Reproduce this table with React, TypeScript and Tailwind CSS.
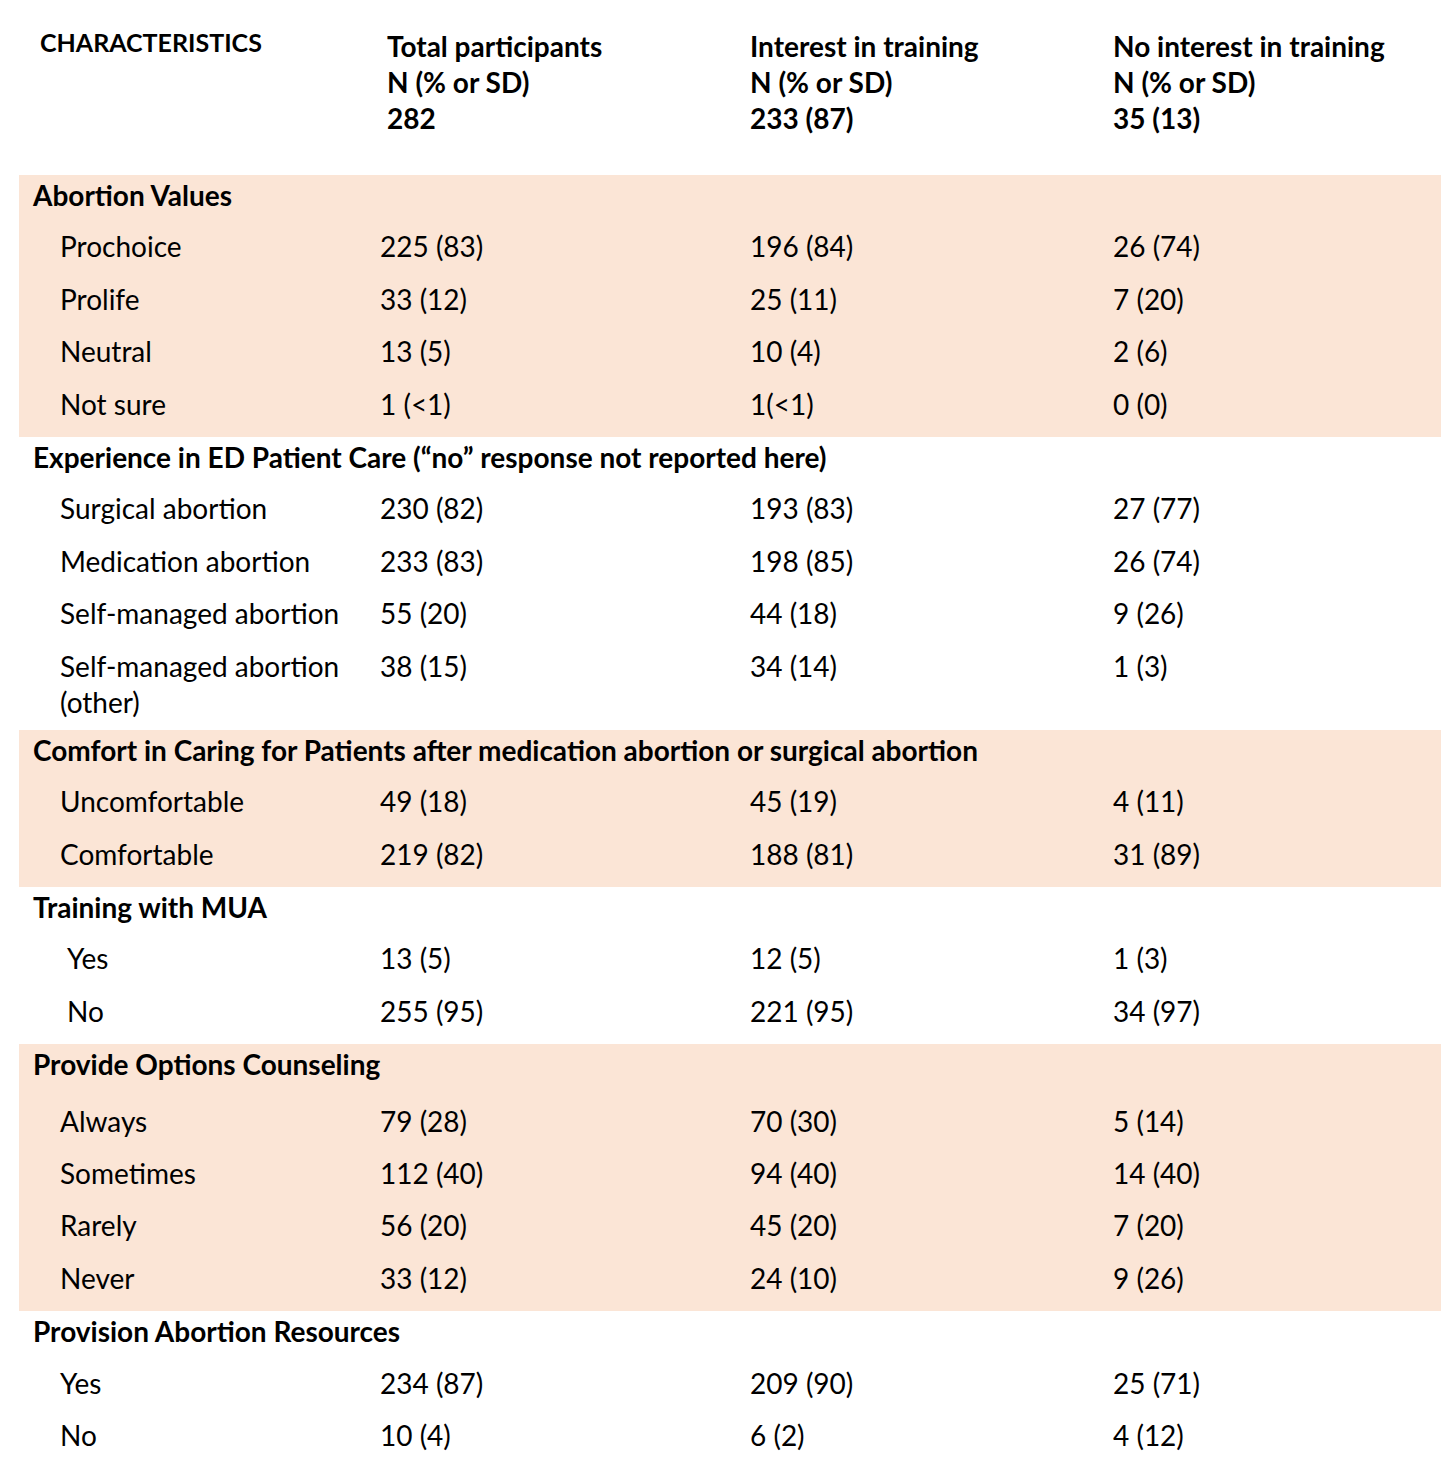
import React from "react";

type Row = { label: string; v: [string, string, string]; h?: string; pl?: string };
type Section = { title: string; shaded: boolean; headH?: string; rows: Row[] };

const sections: Section[] = [
  {
    title: "Abortion Values",
    shaded: true,
    rows: [
      { label: "Prochoice", v: ["225 (83)", "196 (84)", "26 (74)"] },
      { label: "Prolife", v: ["33 (12)", "25 (11)", "7 (20)"] },
      { label: "Neutral", v: ["13 (5)", "10 (4)", "2 (6)"] },
      { label: "Not sure", v: ["1 (<1)", "1(<1)", "0 (0)"] },
    ],
  },
  {
    title: "Experience in ED Patient Care (\u201cno\u201d response not reported here)",
    shaded: false,
    rows: [
      { label: "Surgical abortion", v: ["230 (82)", "193 (83)", "27 (77)"] },
      { label: "Medication abortion", v: ["233 (83)", "198 (85)", "26 (74)"] },
      { label: "Self-managed abortion", v: ["55 (20)", "44 (18)", "9 (26)"] },
      { label: "Self-managed abortion (other)", v: ["38 (15)", "34 (14)", "1 (3)"], h: "h-[83.4px]" },
    ],
  },
  {
    title: "Comfort in Caring for Patients after medication abortion or surgical abortion",
    shaded: true,
    rows: [
      { label: "Uncomfortable", v: ["49 (18)", "45 (19)", "4 (11)"] },
      { label: "Comfortable", v: ["219 (82)", "188 (81)", "31 (89)"] },
    ],
  },
  {
    title: "Training with MUA",
    shaded: false,
    rows: [
      { label: "Yes", v: ["13 (5)", "12 (5)", "1 (3)"], pl: "pl-[48px]" },
      { label: "No", v: ["255 (95)", "221 (95)", "34 (97)"], pl: "pl-[48px]" },
    ],
  },
  {
    title: "Provide Options Counseling",
    shaded: true,
    headH: "h-[57.4px]",
    rows: [
      { label: "Always", v: ["79 (28)", "70 (30)", "5 (14)"] },
      { label: "Sometimes", v: ["112 (40)", "94 (40)", "14 (40)"] },
      { label: "Rarely", v: ["56 (20)", "45 (20)", "7 (20)"] },
      { label: "Never", v: ["33 (12)", "24 (10)", "9 (26)"] },
    ],
  },
  {
    title: "Provision Abortion Resources",
    shaded: false,
    rows: [
      { label: "Yes", v: ["234 (87)", "209 (90)", "25 (71)"] },
      { label: "No", v: ["10 (4)", "6 (2)", "4 (12)"] },
    ],
  },
];

export default function App() {
  return (
    <div className="w-[1441px] min-h-[1473px] bg-white text-black font-['Lato',sans-serif] text-[28px] leading-[36px]">
      {/* Header */}
      <div className="h-[175px] pt-[28px] grid grid-cols-[387px_363px_363px_1fr]">
        <div className="pl-[40px] -mt-[4px] font-bold text-[25px]">CHARACTERISTICS</div>
        <div className="font-bold">
          <div>Total participants</div>
          <div>N (% or SD)</div>
          <div>282</div>
        </div>
        <div className="font-bold">
          <div>Interest in training</div>
          <div>N (% or SD)</div>
          <div>233 (87)</div>
        </div>
        <div className="font-bold">
          <div>No interest in training</div>
          <div>N (% or SD)</div>
          <div>35 (13)</div>
        </div>
      </div>

      <div className="ml-[19px]">
        {sections.map((s) => (
          <div key={s.title} className={s.shaded ? "bg-[#fbe5d6]" : "bg-white"}>
            <div className={`${s.headH ?? "h-[52.4px]"} pl-[14px] pt-[2px] font-bold whitespace-nowrap`}>
              {s.title}
            </div>
            {s.rows.map((r) => (
              <div
                key={s.title + r.label}
                className={`${r.h ?? "h-[52.4px]"} pt-[1px] grid grid-cols-[361px_370px_363px_1fr]`}
              >
                <div className={`${r.pl ?? "pl-[41px]"} pr-[20px]`}>{r.label}</div>
                <div>{r.v[0]}</div>
                <div>{r.v[1]}</div>
                <div>{r.v[2]}</div>
              </div>
            ))}
          </div>
        ))}
      </div>
    </div>
  );
}
